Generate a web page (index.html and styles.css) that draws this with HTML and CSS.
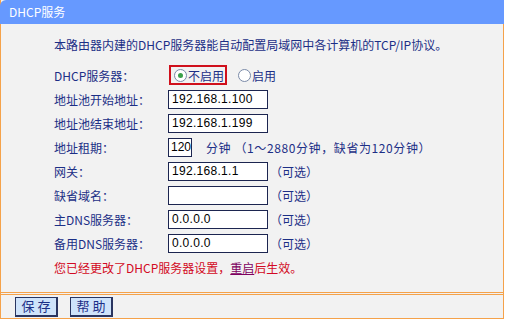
FILE: index.html
```html
<!DOCTYPE html>
<html lang="zh-CN">
<head>
    <meta charset="UTF-8">
    <title>DHCP服务</title>
    <link rel="stylesheet" href="styles.css">
</head>
<body>
    <div class="panel">
        <!-- Title bar -->
        <div class="title">DHCP服务</div>

        <!-- Settings -->
        <div class="content">
            <div class="desc">本路由器内建的DHCP服务器能自动配置局域网中各计算机的TCP/IP协议。</div>

            <div class="row">
                <div class="label">DHCP服务器：</div>
                <div class="field">
                    <span class="choice selected"><span class="radio on"></span>不启用</span>
                    <span class="choice"><span class="radio"></span>启用</span>
                </div>
            </div>
            <div class="row">
                <div class="label">地址池开始地址：</div>
                <div class="field"><span class="input">192.168.1.100</span></div>
            </div>
            <div class="row">
                <div class="label">地址池结束地址：</div>
                <div class="field"><span class="input">192.168.1.199</span></div>
            </div>
            <div class="row">
                <div class="label">地址租期：</div>
                <div class="field"><span class="input short">120</span><span class="note lease">分钟 （1～2880分钟，缺省为120分钟）</span></div>
            </div>
            <div class="row">
                <div class="label">网关：</div>
                <div class="field"><span class="input">192.168.1.1</span><span class="note">（可选）</span></div>
            </div>
            <div class="row">
                <div class="label">缺省域名：</div>
                <div class="field"><span class="input"></span><span class="note">（可选）</span></div>
            </div>
            <div class="row">
                <div class="label">主DNS服务器：</div>
                <div class="field"><span class="input">0.0.0.0</span><span class="note">（可选）</span></div>
            </div>
            <div class="row">
                <div class="label">备用DNS服务器：</div>
                <div class="field"><span class="input">0.0.0.0</span><span class="note">（可选）</span></div>
            </div>

            <div class="warning">您已经更改了DHCP服务器设置，<a href="#">重启</a>后生效。</div>
        </div>

        <!-- Buttons -->
        <div class="footer">
            <button class="button">保 存</button>
            <button class="button">帮 助</button>
        </div>
    </div>
</body>
</html>
```

FILE: styles.css
```css
body {
    margin: 0;
    background: #fff;
    font-family: "Noto Sans CJK SC", "DejaVu Sans", sans-serif;
    font-size: 12px;
    color: #1c2f86;
}
.panel {
    width: 502px;
    height: 318px;
    border-left: 1px solid #f5a24a;
    border-right: 1px solid #f5a24a;
    border-bottom: 1px solid #f5a24a;
    background: #f2f2f2;
    display: flex;
    flex-direction: column;
}
.title {
    height: 24px;
    line-height: 23px;
    margin: 0 -1px;
    padding-left: 9px;
    background: #6699ff;
    color: #fff;
    border-top-left-radius: 6px;
}
.content {
    padding: 12px 0 15px 53px;
    border-bottom: 1px solid #f5a24a;
}
.desc {
    line-height: 18px;
    margin-bottom: 9px;
}
.row {
    display: flex;
    align-items: center;
    height: 24px;
}
.label {
    width: 114px;
}
.field {
    display: flex;
    align-items: center;
}
.choice {
    display: flex;
    align-items: center;
    height: 16px;
    padding: 0 1px 0 3px;
    margin-right: 6px;
    border: 2px solid transparent;
    color: #1c2f86;
}
.choice.selected {
    border-color: #d0101c;
    margin-left: 1px;
}
.radio {
    width: 11px;
    height: 11px;
    border: 1px solid #7a8aa8;
    border-radius: 50%;
    background: #fff;
    margin-right: 1px;
    position: relative;
}
.radio.on::after {
    content: "";
    position: absolute;
    left: 3px;
    top: 3px;
    width: 5px;
    height: 5px;
    border-radius: 50%;
    background: #3aa04a;
}
.input {
    box-sizing: border-box;
    width: 100px;
    height: 19px;
    line-height: 17px;
    padding-left: 3px;
    border: 1px solid #1c2550;
    background: #fff;
    color: #000;
    font-family: "Liberation Sans", sans-serif;
    font-size: 12px;
    letter-spacing: 0.3px;
}
.input.short {
    width: 24px;
    padding-left: 2px;
    letter-spacing: 0;
}
.note {
    margin-left: 2px;
}
.note.lease {
    margin-left: 14px;
    letter-spacing: 0.6px;
}
.warning {
    margin-top: 4px;
    line-height: 18px;
    color: #d20a24;
}
.warning a {
    color: #800060;
}
.footer {
    flex: 1;
    display: flex;
    align-items: center;
    gap: 12px;
    padding-left: 14px;
    border-top: 1px solid #f5a24a;
    margin-top: 1px;
}
.button {
    height: 20px;
    width: 43px;
    padding: 0;
    border: 1px solid #2a3560;
    border-right-width: 2px;
    border-bottom-width: 2px;
    background: #cfe3fa;
    color: #1c2f86;
    font-family: "Noto Sans CJK SC", sans-serif;
    font-size: 13px;
    line-height: 16px;
}
```
